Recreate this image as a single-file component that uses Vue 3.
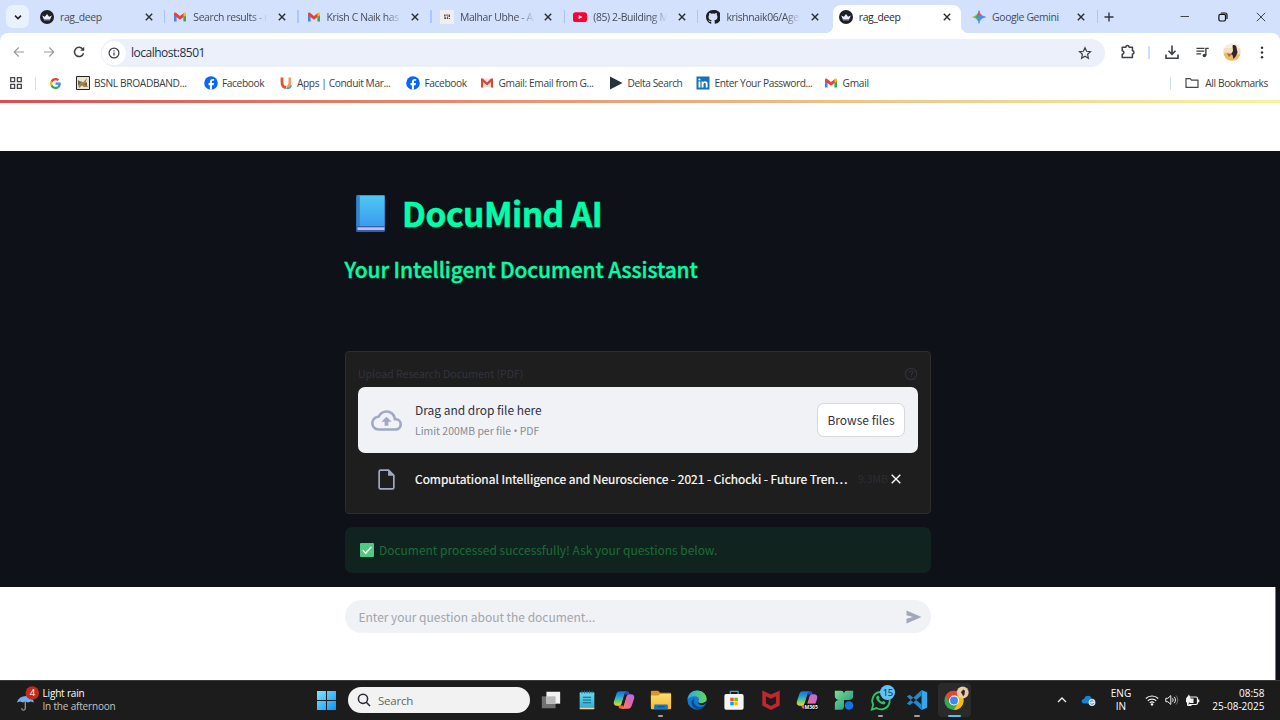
<script setup>
const tabs = [
  { icon: 'crown', title: 'rag_deep' },
  { icon: 'gmail', title: 'Search results - n', fade: true },
  { icon: 'gmail', title: 'Krish C Naik has j', fade: true },
  { icon: 'doc', title: 'Malhar Ubhe - Ap', fade: true },
  { icon: 'youtube', title: '(85) 2-Building M', fade: true },
  { icon: 'github', title: 'krishnaik06/Agen', fade: true, noSep: true },
  { icon: 'crown', title: 'rag_deep', active: true, noSep: true },
  { icon: 'gemini', title: 'Google Gemini' },
]

const bookmarks = [
  { icon: 'google', title: '', cls: 'b0' },
  { icon: 'bsnl', title: 'BSNL BROADBAND...', cls: 'b1' },
  { icon: 'facebook', title: 'Facebook', cls: 'b2' },
  { icon: 'conduit', title: 'Apps | Conduit Mar...', cls: 'b3' },
  { icon: 'facebook', title: 'Facebook', cls: 'b4' },
  { icon: 'gmailold', title: 'Gmail: Email from G...', cls: 'b5' },
  { icon: 'delta', title: 'Delta Search', cls: 'b6' },
  { icon: 'linkedin', title: 'Enter Your Password...', cls: 'b7' },
  { icon: 'gmail', title: 'Gmail', cls: 'b8' },
]

const apps = [
  { icon: 'taskview' },
  { icon: 'notepad' },
  { icon: 'copilot' },
  { icon: 'explorer', mark: true },
  { icon: 'edge' },
  { icon: 'store' },
  { icon: 'mcafee' },
  { icon: 'm365' },
  { icon: 'clover' },
  { icon: 'whatsapp', mark: true },
  { icon: 'vscode', mark: true },
  { icon: 'chrome', active: true },
]
</script>

<template>
  <div class="screen">
    <svg class="defs" width="0" height="0" aria-hidden="true">
      <defs>
        <linearGradient id="gWin" x1="0" y1="0" x2="1" y2="1"><stop offset="0" stop-color="#7fe6ff" /><stop offset="1" stop-color="#0a93f5" /></linearGradient>
        <linearGradient id="gBook" x1="0" y1="0" x2="0" y2="1"><stop offset="0" stop-color="#4fc8f4" /><stop offset="1" stop-color="#3a9bee" /></linearGradient>
        <linearGradient id="gGem" x1="0" y1="0" x2="1" y2="0"><stop offset="0" stop-color="#f5b400" /><stop offset=".3" stop-color="#3fae6c" /><stop offset=".55" stop-color="#4a8df5" /><stop offset="1" stop-color="#3f7df0" /></linearGradient>
        <linearGradient id="gCopA" x1="0" y1="0" x2="0" y2="1"><stop offset="0" stop-color="#1a6fe0" /><stop offset=".4" stop-color="#22a8d8" /><stop offset=".7" stop-color="#6fcf6a" /><stop offset="1" stop-color="#ffd02e" /></linearGradient>
        <linearGradient id="gCopB" x1="1" y1="0" x2="0" y2="1"><stop offset="0" stop-color="#a770f0" /><stop offset=".5" stop-color="#e763a6" /><stop offset="1" stop-color="#ff8a3d" /></linearGradient>
        <linearGradient id="gEdge" x1="0" y1="0" x2="1" y2="0"><stop offset="0" stop-color="#2ba7e4" /><stop offset="1" stop-color="#63d957" /></linearGradient>
        <linearGradient id="gFold" x1="0" y1="0" x2="0" y2="1"><stop offset="0" stop-color="#ffdc6b" /><stop offset="1" stop-color="#f7b92c" /></linearGradient>
        <linearGradient id="gClov" x1="0" y1="0" x2="1" y2="1"><stop offset="0" stop-color="#7be08a" /><stop offset="1" stop-color="#178a86" /></linearGradient>
        <linearGradient id="gNote" x1="0" y1="0" x2="0" y2="1"><stop offset="0" stop-color="#69dcf2" /><stop offset="1" stop-color="#2fa8cf" /></linearGradient>

        <symbol id="crown" viewBox="0 0 14 14"><circle cx="7" cy="7" r="7" fill="#1d2029" /><path d="M2.200 5.400 4.900 6.700 7 4l2.100 2.700 2.700-1.300-1.700 4.200H3.900z" fill="#e9effb" /><path d="M4 9.700h6v.7H4z" fill="#aab2c2" /></symbol>
        <symbol id="gmail" viewBox="0 0 14 14"><path d="M1 4.200v7.200h2.600V6.200z" fill="#4285f4" /><path d="M13 4.200v7.200h-2.600V6.200z" fill="#34a853" /><path d="M10.400 3.800v3.500L13 5.300V3.900c0-1.500-1.500-1.900-2.600-.8z" fill="#fbbc04" /><path d="M1 3.900v1.400L7 9.700l3.600-2.600V3.200L7 5.900 3.600 3.200C2.500 2.200 1 2.500 1 3.900z" fill="#ea4335" /></symbol>
        <symbol id="gmailold" viewBox="0 0 14 14"><path d="M1 2.500h12v9H1z" fill="#f1dfdc" /><path d="M1 2.500h1.800L7 6.600l4.200-4.100H13v9h-2V6L7 9.500 3 6v5.500H1z" fill="#d3473d" /></symbol>
        <symbol id="doc" viewBox="0 0 14 14"><path d="M0 0h14v14H0z" fill="#efefec" /><path d="M4 4.500h1.600v2H4zM6.200 4.500h1.600v1.200H6.200zM8.500 4.500H10v2.600H8.500zM4.200 7.300h2v1.800h-2zM7 6.500h1v2.600H7zM8.700 7.900H10v1.200H8.700z" fill="#555" /></symbol>
        <symbol id="youtube" viewBox="0 0 14 14"><rect x="0" y="2.200" width="14" height="9.800" rx="2.600" fill="#ff0033" /><path d="M5.600 4.900 9.300 7.100 5.600 9.300z" fill="#fff" /></symbol>
        <symbol id="github" viewBox="0 0 16 16"><path fill="#1b1f24" d="M8 0C3.580 0 0 3.580 0 8c0 3.540 2.290 6.530 5.470 7.590.4.070.55-.17.55-.38v-1.490C3.780 14.090 3.310 13 3.310 13c-.36-.92-.89-1.170-.89-1.170-.73-.5.060-.49.060-.49.800.060 1.230.830 1.230.830.710 1.220 1.870.870 2.330.660.070-.52.280-.87.510-1.070-1.780-.2-3.640-.89-3.640-3.950 0-.87.310-1.590.820-2.150-.080-.2-.36-1.020.080-2.120 0 0 .670-.21 2.200.820a7.600 7.600 0 0 1 4 0c1.530-1.040 2.200-.82 2.200-.82.440 1.100.160 1.920.080 2.120.510.560.820 1.270.820 2.150 0 3.070-1.870 3.750-3.650 3.950.290.250.540.730.540 1.480v2.200c0 .210.150.460.550.380A8 8 0 0 0 8 0z" /></symbol>
        <symbol id="gemini" viewBox="0 0 14 14"><path d="M7 .5C7.600 4.200 9.800 6.400 13.500 7 9.800 7.600 7.600 9.800 7 13.500 6.400 9.800 4.200 7.600.5 7 4.200 6.400 6.400 4.200 7 .5z" fill="url(#gGem)" stroke="url(#gGem)" stroke-width=".6" /><path d="M7 .5C7.400 3 8.400 4.700 10 5.700L5 5C6.200 4 6.700 2.600 7 .5z" fill="#e8504a" /></symbol>
        <symbol id="google" viewBox="0 0 48 48"><path fill="#EA4335" d="M24 9.500c3.540 0 6.710 1.220 9.210 3.600l6.850-6.850C35.900 2.380 30.470 0 24 0 14.620 0 6.510 5.380 2.560 13.220l7.980 6.190C12.430 13.720 17.740 9.500 24 9.500z" /><path fill="#4285F4" d="M46.980 24.550c0-1.570-.15-3.090-.38-4.550H24v9.020h12.940c-.58 2.960-2.260 5.480-4.780 7.180l7.730 6c4.510-4.180 7.090-10.360 7.090-17.650z" /><path fill="#FBBC05" d="M10.530 28.590c-.48-1.450-.76-2.990-.76-4.590s.27-3.140.76-4.590l-7.980-6.190C.92 16.460 0 20.120 0 24s.92 7.540 2.560 10.780l7.970-6.190z" /><path fill="#34A853" d="M24 48c6.480 0 11.930-2.130 15.890-5.810l-7.730-6c-2.150 1.450-4.920 2.300-8.160 2.300-6.260 0-11.570-4.220-13.470-9.910l-7.980 6.190C6.510 42.620 14.620 48 24 48z" /></symbol>
        <symbol id="bsnl" viewBox="0 0 14 14"><path d="M.5.500h13v13H.5z" fill="#eee6d4" stroke="#222" /><path d="m2 8 3-3 2 1.500L11 2 9.500 7 12 11H8L6 9.500 3 12z" fill="#9a8350" /><path d="m2 4 3 2-3 3zM8 8l3-2v4z" fill="#6b6450" /></symbol>
        <symbol id="facebook" viewBox="0 0 14 14"><circle cx="7" cy="7" r="6.800" fill="#0866ff" /><path d="M5.900 13.700V9.200H4.500V7.100h1.400V6c0-2.200 1-3.100 3-3.100.5 0 .9.050 1.200.150v1.800H9c-.9 0-1.100.4-1.100 1.200v1.050h2.100L9.600 9.200H7.900v4.500z" fill="#fff" /></symbol>
        <symbol id="conduit" viewBox="0 0 14 14"><path d="M3 1.500v5c0 3.500 1.500 5 4.200 5" fill="none" stroke="#e0552b" stroke-width="2.800" /><path d="M10.800 1.500v5c0 2.500-.8 4-3 5" fill="none" stroke="#f49a5b" stroke-width="2.600" /><path d="M7.500 12.500c3 0 4.500-1.500 4.500-3.500" fill="none" stroke="#3d9ddb" stroke-width="1.500" /></symbol>
        <symbol id="delta" viewBox="0 0 14 14"><path d="M1 .5 13.500 7 1 13.500z" fill="#26343a" /></symbol>
        <symbol id="linkedin" viewBox="0 0 14 14"><path d="M.5.500h13v13H.5z" fill="#1273b5" /><path d="M2.500 5.400h1.900v6H2.500zM5.600 5.400h1.800v.8c.9-1.500 4.200-1.400 4.200 1.500v3.700H9.700V8.200c0-1.700-2.200-1.500-2.200 0v3.200H5.600z" fill="#fff" /><circle cx="3.450" cy="3.500" r="1.100" fill="#fff" /></symbol>
      </defs>
    </svg>

    <header class="chrome">
      <div class="tabstrip">
        <div class="tabsearch"><svg viewBox="0 0 10 10"><path d="m2 3.600 3 3 3-3" fill="none" stroke="#1f1f1f" stroke-width="1.500" /></svg></div>
        <div v-for="(t, i) in tabs" :key="i" class="tab" :class="{ active: t.active, last: t.icon === 'gemini' }">
          <svg class="fav"><use :href="'#' + t.icon" /></svg>
          <span class="tabtext" :class="{ fade: t.fade }">{{ t.title }}</span>
          <svg class="x" viewBox="0 0 8 8"><path d="m.8.8 6.400 6.400M7.200.8.8 7.200" stroke="#2b2d31" stroke-width="1.400" /></svg>
          <i v-if="!t.noSep" class="sep"></i>
        </div>
        <svg class="plus" viewBox="0 0 10 10"><path d="M5 .5v9M.5 5h9" stroke="#33363b" stroke-width="1.400" /></svg>
        <div class="wincontrols">
          <svg viewBox="0 0 10 10"><path d="M.5 4.500h8.500" stroke="#333" stroke-width=".9" /></svg>
          <svg viewBox="0 0 10 10"><rect x=".9" y="2.400" width="6.600" height="6.600" rx="1.400" fill="none" stroke="#111" stroke-width="1.200" /><path d="M2.900 1h4.200c1.200 0 1.900.8 1.900 1.900v4.200" fill="none" stroke="#111" stroke-width="1.200" /></svg>
          <svg viewBox="0 0 10 10"><path d="m.8.8 8.400 8.400M9.200.8.8 9.200" stroke="#333" stroke-width=".9" /></svg>
        </div>
      </div>

      <div class="toolbar">
        <svg class="nav" viewBox="0 0 14 14"><path d="M12 7H2.500M6.700 2.500 2.200 7l4.500 4.500" fill="none" stroke="#9a9c9f" stroke-width="1.200" /></svg>
        <svg class="nav" viewBox="0 0 14 14"><path d="M2 7h9.500M7.300 2.500 11.800 7l-4.500 4.500" fill="none" stroke="#9a9c9f" stroke-width="1.200" /></svg>
        <svg class="nav" viewBox="0 0 14 14"><path d="M11.500 8.300A4.600 4.600 0 1 1 10.700 4.100l1 1.200" fill="none" stroke="#3c4043" stroke-width="1.500" /><path d="M12.200 1.800v4H8.200z" fill="#3c4043" /></svg>
        <div class="omnibox">
          <div class="info"><svg viewBox="0 0 12 12"><circle cx="6" cy="6" r="4.900" fill="none" stroke="#3a3d42" stroke-width="1.200" /><path d="M6 5.400v3.200M6 3.200v1.300" stroke="#3a3d42" stroke-width="1.200" /></svg></div>
          <span class="url">localhost:8501</span>
          <svg class="star" viewBox="0 0 14 14"><path d="m7 1.700 1.600 3.600 3.900.4-2.900 2.600.8 3.900L7 10.200l-3.400 2 .8-3.900-2.900-2.600 3.900-.4z" fill="none" stroke="#3c4043" stroke-width="1.200" /></svg>
        </div>
        <svg class="ext" viewBox="0 0 16 16"><path d="M2.200 3.200h3.700a1.600 1.600 0 0 1 3.200 0h3.300v3.600a1.600 1.600 0 0 1 0 3.200v3.500H2.200v-3.300c2.300-.3 2.300-3.200 0-3.500z" fill="none" stroke="#3c4043" stroke-width="1.500" stroke-linejoin="round" /></svg>
        <i class="vline"></i>
        <svg class="dl" viewBox="0 0 16 16"><path d="M8 1.500v8.700M4.500 6.800 8 10.300l3.500-3.500M2 10.500v3.800h12v-3.800" fill="none" stroke="#3c4043" stroke-width="1.600" /></svg>
        <svg class="media" viewBox="0 0 16 16"><path d="M1.500 3.500H10M1.500 6.500H10M1.500 9.500h5" stroke="#3c4043" stroke-width="1.400" /><circle cx="10" cy="11.200" r="1.900" fill="#3c4043" /><path d="M11.600 11.200V3.600h3" fill="none" stroke="#3c4043" stroke-width="1.500" /></svg>
        <svg class="avatar" viewBox="0 0 18 18"><clipPath id="av"><circle cx="9" cy="9" r="8.700" /></clipPath><g clip-path="url(#av)"><path d="M0 0h18v18H0z" fill="#f3e0c4" /><path d="M0 0h18v5H0z" fill="#f8efe2" /><path d="M0 11c5-3 8-1 10 1l8-1v8H0z" fill="#e9bc6a" /><path d="M9.500 2.500c2-1 4 0 4 2l1 5-1.500 3.500-2.500 3-1-4-1.500-1 2-3z" fill="#35242a" /><path d="m4 10.500 5 .5-3 3z" fill="#b8672f" /></g></svg>
        <svg class="dots" viewBox="0 0 4 14"><circle cx="2" cy="2" r="1.350" fill="#333" /><circle cx="2" cy="7" r="1.350" fill="#333" /><circle cx="2" cy="12" r="1.350" fill="#333" /></svg>
      </div>

      <div class="bookmarks">
        <svg class="apps" viewBox="0 0 12 12"><path d="M.7.700h3.900v3.900H.7zM7.400.700h3.900v3.900H7.400zM.7 7.400h3.900v3.900H.7zM7.400 7.400h3.900v3.900H7.400z" fill="none" stroke="#44474b" stroke-width="1.300" /></svg>
        <i class="vline first"></i>
        <div v-for="(b, i) in bookmarks" :key="i" class="bm" :class="b.cls">
          <svg><use :href="'#' + b.icon" /></svg><span v-if="b.title">{{ b.title }}</span>
        </div>
        <div class="allbm">
          <i class="vline"></i>
          <svg viewBox="0 0 14 12"><path d="M1 10.400V1.600h4.200l1.300 1.500H13v7.300z" fill="none" stroke="#44474b" stroke-width="1.200" stroke-linejoin="round" /></svg>
          <span>All Bookmarks</span>
        </div>
      </div>
    </header>

    <div class="rainbow"></div>
    <div class="pagetop"></div>

    <main class="page">
      <div class="col">
        <h1 class="title">
          <svg viewBox="0 0 30 38"><rect x="0" y="0" width="29" height="37" rx="1.500" fill="#2a64ad" /><path d="M1.500.500H28.500V31H1.500z" fill="url(#gBook)" /><path d="M.5.500h3.300V31H.5z" fill="#3584c4" /><path d="M1.500 32.300H28.500v2.700H1.500z" fill="#cdb5ee" /></svg>
          <span>DocuMind AI</span>
        </h1>
        <h3 class="subtitle">Your Intelligent Document Assistant</h3>
        <section class="uploader">
          <div class="label">
            <span>Upload Research Document (PDF)</span>
            <svg viewBox="0 0 14 14"><circle cx="7" cy="7" r="5.700" fill="none" stroke="#303139" stroke-width="1.200" /><path d="M5.200 5.500c0-2.400 3.700-2.200 3.600 0 0 1.200-1.700 1.300-1.700 2.700M7.100 9.200v1.200" fill="none" stroke="#303139" stroke-width="1.200" /></svg>
          </div>
          <div class="drop">
            <svg viewBox="0 0 24 24"><path fill="#a0a8c6" d="M19.350 10.040A7.490 7.490 0 0 0 12 4C9.110 4 6.600 5.640 5.350 8.040A5.994 5.994 0 0 0 0 14c0 3.310 2.690 6 6 6h13c2.760 0 5-2.240 5-5 0-2.640-2.050-4.780-4.650-4.960zM19 18H6c-2.210 0-4-1.790-4-4 0-2.050 1.530-3.760 3.560-3.970l1.070-.11.500-.95A5.469 5.469 0 0 1 12 6c2.620 0 4.880 1.860 5.390 4.430l.3 1.500 1.530.11A2.980 2.980 0 0 1 22 15c0 1.650-1.350 3-3 3zM8 13h2.550v3h2.900v-3H16l-4-4z" /></svg>
            <div class="droptext"><p>Drag and drop file here</p><small>Limit 200MB per file <b>•</b> PDF</small></div>
            <button>Browse files</button>
          </div>
          <div class="file">
            <svg class="page-icon" viewBox="0 0 16 20"><path d="M1 2.400C1 1.500 1.600 1 2.400 1H10l5 5v11.600c0 .8-.6 1.400-1.400 1.400H2.400c-.8 0-1.400-.6-1.400-1.400z" fill="none" stroke="#a0a8c6" stroke-width="1.600" /><path d="M9.500.6V6.500H15.500z" fill="#a0a8c6" /></svg>
            <span class="fname">Computational Intelligence and Neuroscience - 2021 - Cichocki - Future Tren…</span>
            <span class="fsize">9.3MB</span>
            <svg class="del" viewBox="0 0 10 10"><path d="m.7.700 8.600 8.600M9.300.700.7 9.300" stroke="#fff" stroke-width="1.400" /></svg>
          </div>
        </section>
        <section class="success">
          <svg viewBox="0 0 14 14"><rect width="14" height="14" rx="1" fill="#4fca82" /><path d="m2.800 7.300 2.900 2.900L11.300 4" fill="none" stroke="#fff" stroke-width="1.600" /></svg>
          <span>Document processed successfully! Ask your questions below.</span>
        </section>
      </div>
    </main>

    <div class="bottom">
      <div class="chat">
        <span>Enter your question about the document...</span>
        <svg viewBox="0 0 16 14"><path d="M.5.500 15.500 7 .5 13.500V8.700L7 7 .5 5.300z" fill="#a3a8b8" /></svg>
      </div>
    </div>

    <footer class="taskbar">
      <div class="weather">
        <svg viewBox="0 0 26 28"><path d="M1 16.500C2 10 15.500 6 18 16.500l-3-1-3 1-2.500-1-2.500 1-3-1z" fill="#6eb0f0" /><path d="M9.300 15v7c0 3-3.700 2.600-3.600.3" fill="none" stroke="#8e959e" stroke-width="1.300" /><circle cx="16.300" cy="7" r="6.800" fill="#c42b1c" /></svg>
        <b>4</b>
        <div><p>Light rain</p><p class="dim">In the afternoon</p></div>
      </div>
      <svg class="start" viewBox="0 0 19 19"><path d="M0 0h9v9H0zM10 0h9v9h-9zM0 10h9v9H0zM10 10h9v9h-9z" fill="url(#gWin)" /></svg>
      <div class="search">
        <svg viewBox="0 0 14 14"><circle cx="6" cy="5.800" r="4.600" fill="none" stroke="#2a2a33" stroke-width="1.500" /><path d="m9.300 9.300 3.700 3.700" stroke="#2a2a33" stroke-width="1.600" /></svg>
        <span>Search</span>
      </div>
      <div class="applist">
        <div v-for="a in apps" :key="a.icon" class="app" :class="{ on: a.active }">
          <svg v-if="a.icon === 'taskview'" viewBox="0 0 24 24"><path d="M2 8h15v13H2z" fill="#707070" /><path d="M7 3h15v13H7z" fill="#f2f2f2" /><path d="M7 8h10v8H7z" fill="#b9b9b9" /></svg>
          <svg v-else-if="a.icon === 'notepad'" viewBox="0 0 24 24"><rect x="4" y="3.500" width="16" height="18.500" rx="1.200" fill="url(#gNote)" /><path d="M4 20.500h16V22H4z" fill="#f4d3a1" /><path d="M7.500 9h9M7.500 12h9M7.500 15h9" stroke="#12647f" stroke-width="1.200" /><path d="M6.500 2v3M9.200 2v3M12 2v3M14.800 2v3M17.500 2v3" stroke="#1b7592" stroke-width="1.100" /></svg>
          <svg v-else-if="a.icon === 'copilot' || a.icon === 'm365'" viewBox="0 0 24 24"><path d="M12.500 2.500h3c1.700 0 2.300 1.200 2.800 3.800h-5z" fill="#1f4fc4" /><path d="M11.500 21.500h-3c-1.700 0-2.300-1.200-2.800-3.800h5z" fill="#f0604d" /><path d="M7.500 2.500h7c-1 .5-1.600 1.500-2 3l-3 10c-.5 1.700-1.500 2.700-3.300 2.700H4.500c-3 0-4.300-2-3.500-4.700L3.500 6c.7-2.200 1.800-3.500 4-3.500z" fill="url(#gCopA)" /><path d="M16.500 21.500h-7c1-.5 1.600-1.500 2-3l3-10c.5-1.700 1.500-2.700 3.300-2.700h1.700c3 0 4.300 2 3.500 4.700L20.500 18c-.7 2.200-1.800 3.500-4 3.500z" fill="url(#gCopB)" /><path d="M12.600 6.300h2.600c-.5.600-.6 1.200-.8 2l-2.900 9.400H9c.5-.7.700-1.300.9-2z" fill="#1c1c1c" /><g v-if="a.icon === 'm365'"><path d="M9 16h15v7H9z" fill="#050505" /><text x="16.500" y="21.700" text-anchor="middle" class="badge365">M365</text></g></svg>
          <svg v-else-if="a.icon === 'explorer'" viewBox="0 0 24 24"><path d="M1 3c0-.6.400-1 1-1h7l2 2h11c.6 0 1 .4 1 1v15H1z" fill="#d9951f" /><path d="M1 7h8L11 5.500h12v15.500c0 .6-.4 1-1 1H2c-.6 0-1-.4-1-1z" fill="url(#gFold)" /><path d="M4.500 22v-3.500c0-1 .7-1.500 1.500-1.500h12c.8 0 1.500.5 1.500 1.500V22z" fill="#1976c5" /><path d="M8 19.300h8" stroke="#0b4f94" stroke-width="1" /></svg>
          <svg v-else-if="a.icon === 'edge'" viewBox="0 0 24 24"><circle cx="12" cy="12" r="10.500" fill="#1478cf" /><path d="M1.500 11.500C2.500 5 7 1.500 12.200 1.500 18.500 1.500 22.500 6.200 22.500 10.500c0 3-2.800 5-5.800 5-2.200 0-3.400-.7-3.400-1.500 0-.6.900-1 .9-2.500 0-2-2-3.600-4.700-3.600C6 7.900 3 9.500 1.500 11.500z" fill="url(#gEdge)" /><path d="M8.500 12.500c-.5 3 2 7 6.500 7 2 0 3.800-.7 5-1.500-1.500 2.500-4.500 4-8 4-3-.7-6-3.500-6-7 0-3 2-4.500 3.500-4.500-.6.600-.9 1.200-1 2z" fill="#0b4a91" /><path d="M13.300 14c0 .8 1.200 1.500 3.400 1.500 2 0 4.700-1 5.800-2.700l-1.200 3.500c-3 2-7.500 1.200-8-1z" fill="#1c1c1c" /></svg>
          <svg v-else-if="a.icon === 'store'" viewBox="0 0 24 24"><path d="M8 8V2.500h8.500V8" fill="none" stroke="#3c9fd8" stroke-width="1.400" /><rect x="1.500" y="5.500" width="21" height="17" rx="2" fill="#f4f4f4" /><path d="M7.900 9.500h3.800v3.800H7.900z" fill="#f25022" /><path d="M12.400 9.500h3.800v3.800h-3.800z" fill="#7fba00" /><path d="M7.900 14h3.800v3.800H7.900z" fill="#00a4ef" /><path d="M12.400 14h3.800v3.800h-3.800z" fill="#ffb900" /></svg>
          <svg v-else-if="a.icon === 'mcafee'" viewBox="0 0 24 24"><path d="M2.500 1.500 12 6l9.500-4.500V18L12 23l-9.500-5z" fill="#c3262f" /><path d="M6.500 8 12 10.500 17.500 8v7.500L12 18.500l-5.500-3z" fill="#1c1c1c" /></svg>
          <svg v-else-if="a.icon === 'clover'" viewBox="0 0 24 24"><path d="M2 2h7c2 0 3 1.500 3 3.500V12H7c-3 0-5-1.500-5-4zM22 2h-7c-2 0-3 1.500-3 3.500V12h5c3 0 5-1.500 5-4zM2 22.500h7c2 0 3-1.500 3-3.500v-7H7c-3 0-5 1.500-5 4z" fill="url(#gClov)" /><circle cx="17.500" cy="18" r="4.700" fill="#1477e0" /></svg>
          <svg v-else-if="a.icon === 'whatsapp'" viewBox="0 0 24 24"><path d="m2 22.500 1.500-5.500a9.500 9.500 0 1 1 3.500 3.800z" fill="#1c1c1c" stroke="#29c568" stroke-width="2" /><path d="M8 7.300c.6-.5 1.300-.4 1.600.3l.8 1.800c.2.500-.7 1.100-.6 1.600.7 1.400 1.900 2.500 3.300 3 .5.100 1-1 1.500-.8l1.900.9c.6.400.4 1.500-.3 2.100-3.200 2.500-10-3.500-9.400-7.100.1-.8.600-1.300 1.200-1.800z" fill="#29c568" /></svg>
          <svg v-else-if="a.icon === 'vscode'" viewBox="0 0 24 24"><path d="m17 1 6 2.500v17L17 23z" fill="#34a6f0" /><path d="M17 1v6L4 17.800 1 15.800zM17 23v-6L4 6.200 1 8.200z" fill="#2489ca" /></svg>
          <svg v-else-if="a.icon === 'chrome'" viewBox="0 0 24 24"><circle cx="12" cy="12.500" r="10.500" fill="#34a853" /><path d="M2.900 7.300A10.500 10.500 0 0 1 21.100 7.300H12z" fill="#ea4335" /><path d="M21.100 7.300A10.500 10.500 0 0 1 12 23l4.300-8L12 7.300z" fill="#fbbc04" /><path d="M2.900 7.300 7.700 15 12 7.300z" fill="#ea4335" /><circle cx="12" cy="12.500" r="5.400" fill="#fff" /><circle cx="12" cy="12.500" r="4.300" fill="#4285f4" /><circle cx="21.500" cy="3.800" r="6.500" fill="#e6cda4" /><path d="m22 .5 2 1.500-.5 4-1.500 2-1.500-3-1-1.500z" fill="#342426" /></svg>
          <em v-if="a.icon === 'whatsapp'" class="count">15</em>
          <i v-if="a.mark || a.active" class="mark"></i>
        </div>
      </div>
      <div class="tray">
        <svg class="up" viewBox="0 0 10 10"><path d="m1 7 4-4 4 4" fill="none" stroke="#eee" stroke-width="1.300" /></svg>
        <svg class="cloud" viewBox="0 0 16 12"><path d="M3.500 9.500C-.5 9.500 0 5 3 5c.8-4 6.500-4.500 7.500-.8 3 0 4 5.300.5 5.300z" fill="#1683d8" /><circle cx="11" cy="8.500" r="3.400" fill="#dce8f4" /><path d="M9.300 8a1.800 1.800 0 0 1 3.200-.5M12.700 9a1.800 1.800 0 0 1-3.200.5" fill="none" stroke="#246aa8" stroke-width=".8" /></svg>
        <div class="lang"><p>ENG</p><p>IN</p></div>
        <svg class="wifi" viewBox="0 0 14 12"><path d="M.8 4.500a9 9 0 0 1 12.400 0M2.800 6.700a6.200 6.200 0 0 1 8.400 0M4.800 8.800a3.300 3.300 0 0 1 4.400 0" fill="none" stroke="#f2f2f2" stroke-width="1.200" /><circle cx="7" cy="10.400" r="1.200" fill="#fff" /></svg>
        <svg class="vol" viewBox="0 0 14 12"><path d="M.8 4.300h2l3-2.700v8.800l-3-2.700h-2z" fill="none" stroke="#f2f2f2" stroke-width="1" /><path d="M7.500 4.200c.8 1 .8 2.600 0 3.600M9.200 2.800c1.700 1.800 1.700 4.600 0 6.400" fill="none" stroke="#f2f2f2" stroke-width="1" /><path d="M11 1.500c2.300 2.500 2.300 6.500 0 9" fill="none" stroke="#777" stroke-width="1" /></svg>
        <svg class="bat" viewBox="0 0 15 13"><rect x="3" y="3" width="9.500" height="7.500" rx="1.500" fill="none" stroke="#f2f2f2" stroke-width="1.200" /><path d="M4.500 4.500h4v4.500h-4zM13 5.500h1.300v2.700H13zM1 4.500 4 .5 5.500 4v3L3 9.500 1 8z" fill="#f2f2f2" /><path d="M2.500 7.500v4h4" fill="none" stroke="#f2f2f2" /></svg>
        <div class="clock"><p>08:58</p><p>25-08-2025</p></div>
      </div>
    </footer>
  </div>
</template>

<style>
html, body { margin: 0; background: #fff; overflow: hidden; }
</style>

<style scoped>
.screen { width: 1280px; height: 720px; display: flex; flex-direction: column; overflow: hidden; background: #fff; font-family: "Open Sans", "Noto Sans", sans-serif; position: relative; }
.defs { position: absolute; }
svg { display: block; flex: none; }
p, h1, h3 { margin: 0; }
span { white-space: nowrap; }

.chrome { height: 100px; flex: none; background: #d3e1fc; }
.tabstrip { height: 33px; display: flex; align-items: center; }
.tabsearch { width: 23px; height: 23px; margin: 0 4px 0 6px; border-radius: 7px; background: #eaf1fe; display: grid; place-items: center; }
.tabsearch svg { width: 10px; height: 10px; }
.tab { position: relative; width: 133.300px; height: 33px; flex: none; display: flex; align-items: center; box-sizing: border-box; padding-left: 7px; }
.fav { width: 14px; height: 14px; margin-right: 6px; }
.tabtext { width: 81px; font-size: 10.400px; line-height: 16px; color: #464c59; letter-spacing: -.36px; }
.tabtext.fade { -webkit-mask-image: linear-gradient(90deg, #000 72%, transparent 92%); mask-image: linear-gradient(90deg, #000 72%, transparent 92%); }
.x { width: 8px; height: 8px; margin-left: 3.500px; }
.sep { position: absolute; right: 1px; top: 10px; width: 1.500px; height: 13px; background: #a9c7fa; }
.tab.active::before { content: ""; position: absolute; left: 0; top: 5px; width: 128px; height: 28px; background: #fff; border-radius: 8px 8px 0 0; }
.tab.active::after { content: ""; position: absolute; left: -8px; bottom: 0; width: 144px; height: 8px; background: radial-gradient(circle at 0 0, transparent 8px, #fff 8.500px) left / 8px 8px no-repeat, radial-gradient(circle at 100% 0, transparent 8px, #fff 8.500px) right / 8px 8px no-repeat; }
.tab.active > * { position: relative; z-index: 1; }
.tab.active { padding-left: 6px; }
.tab.active .tabtext { color: #1f1f1f; }
.tab.last { padding-left: 5.500px; }
.tab.last .tabtext { margin-left: .5px; }
.plus { width: 10px; height: 10px; margin-left: 5px; }
.wincontrols { margin-left: auto; display: flex; gap: 28px; padding-right: 14px; }
.wincontrols svg { width: 10px; height: 10px; }

.toolbar { height: 38px; background: #fff; border-radius: 8px 8px 0 0; display: flex; align-items: center; padding-left: 11.500px; }
.nav { width: 14px; height: 14px; margin-right: 16px; }
.omnibox { width: 1004.500px; height: 28px; margin-left: -1px; margin-top: 1px; border-radius: 14px; background: #ebf0fa; display: flex; align-items: center; }
.info { width: 24px; height: 24px; margin-left: 1.500px; border-radius: 50%; background: #fff; display: grid; place-items: center; }
.info svg { width: 12px; height: 12px; }
.url { margin-left: 5px; font-size: 12px; line-height: 16px; padding-top: 1px; letter-spacing: -.5px; color: #22304a; }
.star { width: 14px; height: 14px; margin: 0 13px 0 auto; }
.ext { width: 16px; height: 16px; margin-left: 15px; }
.vline { width: 1.500px; height: 13px; background: #cfdffb; flex: none; }
.ext + .vline { margin-left: 12px; }
.dl { width: 16px; height: 16px; margin-left: 14px; }
.media { width: 15px; height: 15px; margin-left: 15px; }
.avatar { width: 18px; height: 18px; margin-left: 13px; }
.dots { width: 4px; height: 13px; margin-left: 19px; }

.bookmarks { height: 24px; padding: 0 12px 5px 10px; background: #fff; display: flex; align-items: center; font-size: 10.200px; color: #3c4043; line-height: 16px; letter-spacing: -.41px; }
.apps { width: 12px; height: 12px; }
.vline.first { margin: 0 14px 0 12.500px; }
.bm { display: flex; align-items: center; gap: 4.500px; flex: none; }
.bm svg { width: 14px; height: 14px; }
.b0 svg { width: 11px; height: 11px; }
.b0 { width: 25.500px; }
.b1 { width: 128px; letter-spacing: -.35px; }
.b2 { width: 75px; }
.b3 { width: 127.500px; }
.b4 { width: 74px; }
.b5 { width: 129px; letter-spacing: -.35px; }
.b6 { width: 87px; }
.b7 { width: 128px; }
.b8 { letter-spacing: -.25px; }
.allbm { margin-left: auto; display: flex; align-items: center; letter-spacing: -.4px; }
.allbm svg { width: 14px; height: 12px; margin: 0 6px 0 14px; }

.rainbow { height: 3px; flex: none; background: linear-gradient(90deg, #d84f55, #e58a69 35%, #edc08a 65%, #f6f3a0); }
.pagetop { height: 48px; flex: none; background: #fff; }

.page { height: 436px; flex: none; background: #0e1117; font-family: "Noto Sans CJK SC", sans-serif; }
.col { width: 586px; margin-left: 345px; }
.title { display: flex; align-items: center; height: 44px; padding-top: 40px; font-size: 33.500px; line-height: 44px; font-weight: 700; letter-spacing: -.5px; -webkit-text-stroke: .5px #00ffaa; color: #00ffaa; }
.title svg { width: 30px; height: 38px; margin: 1px 16.500px 0 10.500px; }
.title span { margin-top: -1px; }
.subtitle { margin: 19px 0 0 -.6px; height: 30px; line-height: 30px; font-size: 21px; font-weight: 500; letter-spacing: -.12px; -webkit-text-stroke: .35px #00ffaa; color: #00ffaa; white-space: nowrap; }
.uploader { margin-top: 67px; height: 163px; box-sizing: border-box; border: 1px solid #2c2d2f; border-radius: 4px; background: #1e1e1e; padding: 13px 12px 0; }
.label { display: flex; justify-content: space-between; align-items: center; height: 18px; font-size: 10.500px; line-height: 18px; color: #31333f; }
.label svg { width: 14px; height: 14px; }
.drop { margin-top: 4px; height: 66px; border-radius: 7px; background: #f0f2f6; display: flex; align-items: center; padding: 0 13px; box-sizing: border-box; }
.drop > svg { width: 31px; height: 31px; }
.droptext { margin-left: 13px; }
.droptext p { font-size: 12px; line-height: 20px; color: #31333f; letter-spacing: -.03px; }
.droptext small { display: block; font-size: 10.450px; line-height: 17px; margin-top: 2px; color: #888a93; }
.droptext small b { font-family: "Open Sans", sans-serif; font-weight: 400; }
.drop button { margin-left: auto; width: 88px; height: 34px; padding: 0; border: 1px solid #d6d8dc; border-radius: 7px; background: #fff; color: #31333f; font: 12px/20px "Noto Sans CJK SC", sans-serif; white-space: nowrap; }
.file { display: flex; align-items: center; height: 52px; padding: 0 15px 0 19.500px; font-size: 12px; line-height: 20px; }
.page-icon { width: 17px; height: 21px; }
.fname { margin: -1px 0 0 20.500px; width: 434px; color: #fff; font-weight: 400; letter-spacing: -.03px; -webkit-text-stroke: .2px #fff; }
.fsize { width: 30px; margin: -1px 0 0 9px; font-size: 10.500px; color: #2b2d36; }
.del { width: 10px; height: 10px; margin-left: 3px; }
.success { margin-top: 13px; height: 46px; border-radius: 7px; background: #11231f; display: flex; align-items: center; padding-left: 15px; gap: 5px; color: #1a6e38; font-size: 12px; line-height: 20px; letter-spacing: -.02px; }
.success svg { width: 14px; height: 14px; }

.bottom { height: 93px; flex: none; background: #fff; border-right: 4px solid #0e1117; box-sizing: border-box; padding: 13px 0 0 345px; font-family: "Noto Sans CJK SC", sans-serif; box-shadow: inset -1px 0 #777; }
.chat { width: 586px; height: 33px; border-radius: 17px; background: #f0f2f6; display: flex; align-items: center; justify-content: space-between; box-sizing: border-box; padding: 0 9px 0 13.500px; color: #a3a5ac; font-size: 12px; line-height: 20px; letter-spacing: -.02px; }
.chat svg { width: 16px; height: 14px; }

.taskbar { height: 40px; flex: none; background: #1c1c1c; border-top: 1px solid #3b3b3b; padding-bottom: 1px; box-sizing: border-box; display: flex; align-items: center; color: #fff; font-size: 10px; line-height: 13px; white-space: nowrap; }
.weather { display: flex; align-items: center; position: relative; width: 317px; flex: none; }
.weather > svg { width: 26px; height: 28px; margin-left: 16px; }
.weather b { position: absolute; left: 26px; top: 0; width: 13px; text-align: center; font-size: 9.500px; font-weight: 400; }
.weather > div { margin-left: .5px; letter-spacing: -.18px; }
.dim { color: #c3c3c3; }
.start { width: 19px; height: 19px; }
.search { margin-left: 12px; width: 182px; height: 26px; border-radius: 13px; background: #f2f2f2; display: flex; align-items: center; flex: none; color: #666; font-size: 11.500px; }
.search svg { width: 14px; height: 14px; margin: 0 7px 0 9px; }
.search span { letter-spacing: -.2px; }
.applist { display: flex; margin-left: 2.500px; }
.app { width: 36.650px; height: 38px; position: relative; display: flex; align-items: center; justify-content: center; }
.app svg { width: 22px; height: 22px; position: relative; overflow: visible; }
.app.on::before { content: ""; position: absolute; left: 2px; top: 2px; width: 33px; height: 34px; background: #2a2a2a; border-radius: 4px; }
.mark { position: absolute; left: 15.500px; bottom: 2.500px; width: 5.500px; height: 2px; border-radius: 1px; background: #a0a0a0; }
.on .mark { left: 12px; width: 13px; background: #5cbcf5; }
.count { position: absolute; left: 18px; top: 4px; width: 15px; height: 15px; border-radius: 50%; background: #5fc3f6; color: #14283a; font-style: normal; font-size: 9.500px; line-height: 15px; text-align: center; letter-spacing: -.3px; }
.badge365 { font: 700 5.500px "Open Sans", sans-serif; fill: #fff; }
.tray { margin-left: auto; display: flex; align-items: center; padding-right: 15.500px; text-align: center; }
.up { width: 10px; height: 10px; }
.cloud { width: 16px; height: 12px; margin-left: 14px; }
.lang { width: 26px; margin-left: 11px; font-size: 10px; }
.wifi { width: 14px; height: 12px; margin-left: 11px; }
.vol { width: 14px; height: 12px; margin-left: 5.500px; }
.bat { width: 15px; height: 13px; margin-left: 6px; }
.clock { width: 65px; text-align: right; font-size: 10px; letter-spacing: 0; }
</style>
